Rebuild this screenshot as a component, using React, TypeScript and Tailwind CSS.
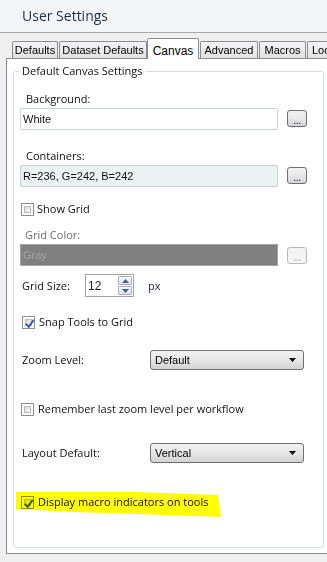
import React from 'react';

const ui = "font-['Open_Sans',sans-serif] text-[11px] leading-[16px] text-[#111]";
const ms = "font-['Liberation_Sans',Arial,sans-serif] text-[11px]";

const Check: React.FC<{ checked?: boolean }> = ({ checked }) => (
  <div className="w-[13px] h-[13px] border border-[#8e8f8f] bg-white p-[2px] shrink-0">
    <div className="relative w-full h-full border border-[#b9bcc2] bg-gradient-to-br from-[#d6d9de] to-[#fbfbfb]">
      {checked && (
        <svg viewBox="0 0 9 9" className="absolute -left-[2px] -top-[2px] w-[11px] h-[11px]">
          <path d="M1.5 4.8 L3.8 7.2 L8 1.5" fill="none" stroke="#4a5d9c" strokeWidth="1.7" />
        </svg>
      )}
    </div>
  </div>
);

const DotsButton: React.FC<{ disabled?: boolean }> = ({ disabled }) => (
  <div
    className={
      disabled
        ? 'ml-[9px] mt-[3px] w-[20px] h-[17px] rounded-[3px] border border-[#b7babc] bg-[#f4f4f4] flex items-end justify-center'
        : 'ml-[9px] mt-[2px] w-[20px] h-[17px] rounded-[3px] border border-[#707070] bg-gradient-to-b from-[#f2f2f2] via-[#e8e8e8] to-[#d4d4d4] flex items-end justify-center'
    }
  >
    <span className={`${ms} leading-[12px] tracking-[-0.5px] ${disabled ? 'text-[#9a9a9a]' : 'text-[#1b2a6b]'}`}>...</span>
  </div>
);

const Select: React.FC<{ value: string }> = ({ value }) => (
  <div className="w-[154px] h-[20px] rounded-[3px] border border-[#707070] bg-gradient-to-b from-[#f3f3f3] via-[#e6e6e6] to-[#d3d3d3] flex items-center pl-[4px] pr-[6px]">
    <span className={`${ms} flex-1 text-black`}>{value}</span>
    <svg width="8" height="4" viewBox="0 0 8 4">
      <path d="M0 0 H7 L3.5 4 Z" fill="#000" />
    </svg>
  </div>
);

const tabs = [
  { label: 'Defaults', w: 'w-[46px]' },
  { label: 'Dataset Defaults', w: 'w-[88px]' },
  { label: 'Canvas', w: 'w-[52px]', active: true },
  { label: 'Advanced', w: 'w-[58px]' },
  { label: 'Macros', w: 'w-[47px]' },
  { label: 'Loc', w: 'w-[40px] !justify-start pl-[4px]' },
];

export default function App() {
  return (
    <div className="w-[327px] h-[562px] overflow-hidden bg-[#f0f0f0] flex flex-col">
      <div className="h-[33px] shrink-0 border-b border-[#a9a9a9] bg-[#f3f5f9] flex items-center pl-[22px] pb-[2px]">
        <span className="font-['Open_Sans',sans-serif] text-[14px] text-[#1e2f45]">User Settings</span>
      </div>

      <div className="mt-[5px] h-[20px] flex items-end pl-[12px] relative z-10 shrink-0">
        {tabs.map((t) =>
          t.active ? (
            <div
              key={t.label}
              className={`${t.w} h-[21px] -mb-[1px] shrink-0 bg-white border border-b-0 border-[#898c95] rounded-t-[2px] flex justify-center pt-[3px] ${ms} text-[12px] text-black`}
            >
              {t.label}
            </div>
          ) : (
            <div
              key={t.label}
              className={`${t.w} h-[17px] ml-[1px] first:ml-0 shrink-0 bg-gradient-to-b from-[#f4f4f4] to-[#e2e2e2] border border-b-0 border-[#898c95] rounded-t-[2px] flex items-center justify-center ${ms} text-[11.5px] text-black whitespace-nowrap overflow-hidden`}
            >
              {t.label}
            </div>
          )
        )}
      </div>

      <div className="ml-[6px] w-[340px] h-[496px] shrink-0 bg-white border border-[#898c95] pt-[12px] pl-[6px]">
        <div className="relative w-[311px] h-[477px] rounded-[3px] border border-[#d5dfe5]">
          <span className={`absolute -top-[9px] left-[5px] bg-white px-[3px] ${ui} text-[11.5px] text-[#111]`}>
            Default Canvas Settings
          </span>

          <div className={`flex flex-col pl-[6px] ${ui}`}>
            <div className="mt-[19px] ml-[6px] h-[16px]">Background:</div>
            <div className="mt-[1px] flex">
              <div className={`w-[258px] h-[22px] rounded-[2px] border border-[#c9d1d8] bg-white flex items-center pl-[2px] ${ms}`}>White</div>
              <DotsButton />
            </div>

            <div className="mt-[18px] ml-[6px] h-[16px]">Containers:</div>
            <div className="mt-[1px] flex">
              <div className={`w-[258px] h-[22px] rounded-[2px] border border-[#c9d1d8] bg-[#ecf2f2] flex items-center pl-[2px] ${ms}`}>
                R=236, G=242, B=242
              </div>
              <DotsButton />
            </div>

            <div className="mt-[14px] h-[16px] flex items-center">
              <div className="ml-[1px]"><Check /></div>
              <span className="ml-[3px]">Show Grid</span>
            </div>

            <div className="mt-[10px] ml-[5px] h-[16px] text-[#6d6d6d]">Grid Color:</div>
            <div className="mt-[1px] flex">
              <div className={`w-[258px] h-[22px] border border-[#a6a6a6] bg-[#808080] flex items-center pl-[2px] ${ms} text-[#a3a3a3]`}>Gray</div>
              <DotsButton disabled />
            </div>

            <div className="mt-[8px] h-[23px] flex items-center">
              <span className="ml-[2px] w-[63px]">Grid Size:</span>
              <div className="w-[49px] h-[23px] border border-[#a3a3a3] bg-white flex">
                <span className={`flex-1 pl-[2px] pt-[3px] ${ms} text-[12px] text-[#1b1b3a]`}>12</span>
                <div className="w-[14px] mr-[1px] my-[1px] flex flex-col gap-[1px]">
                  <div className="flex-1 border border-[#a9b1bd] rounded-[1px] bg-gradient-to-b from-[#f7f8fa] to-[#dfe3ea] flex items-center justify-center">
                    <svg width="7" height="4" viewBox="0 0 7 4"><path d="M0 4 H7 L3.5 0 Z" fill="#4d5f91" /></svg>
                  </div>
                  <div className="flex-1 border border-[#a9b1bd] rounded-[1px] bg-gradient-to-b from-[#f7f8fa] to-[#dfe3ea] flex items-center justify-center">
                    <svg width="7" height="4" viewBox="0 0 7 4"><path d="M0 0 H7 L3.5 4 Z" fill="#4d5f91" /></svg>
                  </div>
                </div>
              </div>
              <span className="ml-[14px] text-[#2a1b3f]">px</span>
            </div>

            <div className="mt-[17px] h-[16px] flex items-center">
              <div className="ml-[2px]"><Check checked /></div>
              <span className="ml-[4px]">Snap Tools to Grid</span>
            </div>

            <div className="mt-[20px] h-[20px] flex items-center">
              <span className="ml-[2px] w-[128px]">Zoom Level:</span>
              <Select value="Default" />
            </div>

            <div className="mt-[31px] h-[16px] flex items-center">
              <div className="ml-[1px]"><Check /></div>
              <span className="ml-[4px]">Remember last zoom level per workflow</span>
            </div>

            <div className="mt-[26px] h-[20px] flex items-center">
              <span className="ml-[2px] w-[128px]">Layout Default:</span>
              <Select value="Vertical" />
            </div>

            <div className="mt-[31px] h-[16px] flex items-center relative">
              <div className="ml-[1px]"><Check checked /></div>
              <span className="ml-[4px]">Display macro indicators on tools</span>
              <svg
                className="absolute -left-[5px] -top-[3px] mix-blend-multiply pointer-events-none"
                width="210"
                height="27"
                viewBox="0 0 210 27"
              >
                <path d="M1 1 L120 1 L203 4 L206 26 L150 24 L60 21 L1 18 Z" fill="#ffff00" />
              </svg>
            </div>
          </div>
        </div>
      </div>
    </div>
  );
}
